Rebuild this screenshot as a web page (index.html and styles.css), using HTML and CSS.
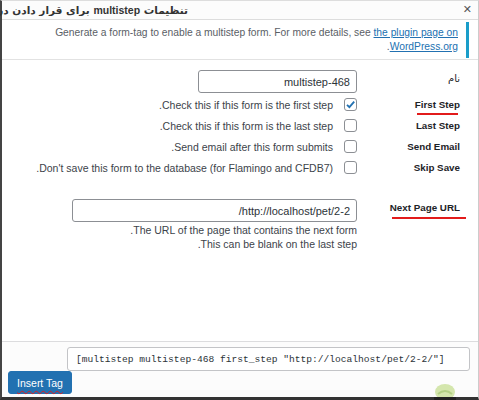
FILE: index.html
```html
<!DOCTYPE html>
<html>
<head>
<meta charset="utf-8">
<link rel="stylesheet" href="styles.css">
</head>
<body>
<div class="frame">
  <div class="titlebar">
    <div class="title">تنظیمات <b>multistep</b> برای قرار دادن در فرم تماس</div>
    <span class="close">✕</span>
  </div>
  <div class="notice" dir="rtl">
    <p>Generate a form-tag to enable a multistep form. For more details, see <a href="#">the plugin page on WordPress.org</a>.</p>
  </div>
  <div class="form" dir="rtl">
    <div class="row row-name">
      <div class="label lbl-fa">نام</div>
      <div class="field"><input class="text name-input" type="text" value="multistep-468"></div>
    </div>
    <div class="row row-check">
      <div class="label"><span class="ul">First Step</span></div>
      <div class="field"><span class="cb checked"><svg viewBox="0 0 13 13" width="13" height="13"><path d="M3 6.8 L5.4 9.2 L10.2 3.6" fill="none" stroke="#2271b1" stroke-width="1.8"/></svg></span><span class="desc">Check this if this form is the first step.</span></div>
    </div>
    <div class="row row-check">
      <div class="label">Last Step</div>
      <div class="field"><span class="cb"></span><span class="desc">Check this if this form is the last step.</span></div>
    </div>
    <div class="row row-check">
      <div class="label">Send Email</div>
      <div class="field"><span class="cb"></span><span class="desc">Send email after this form submits.</span></div>
    </div>
    <div class="row row-check">
      <div class="label">Skip Save</div>
      <div class="field"><span class="cb"></span><span class="desc">Don't save this form to the database (for Flamingo and CFDB7).</span></div>
    </div>
    <div class="row row-url">
      <div class="label"><span class="ul ul-wide">Next Page URL</span></div>
      <div class="field col">
        <input class="text url-input" type="text" value="http://localhost/pet/2-2/">
        <div class="help">The URL of the page that contains the next form.</div>
        <div class="help">This can be blank on the last step.</div>
      </div>
    </div>
  </div>
  <div class="footer">
    <input class="tag" type="text" dir="ltr" value='[multistep multistep-468 first_step "http://localhost/pet/2-2/"]'>
    <button class="insert"><span class="ul-red">Insert Tag</span></button>
  </div>
  <svg class="logo" width="30" height="18" viewBox="0 0 30 18"><ellipse cx="15" cy="10" rx="10" ry="8" fill="#d4e6ad"/><path d="M8 12 Q15 6 22 12" stroke="#b3d085" stroke-width="2" fill="none"/><rect x="4" y="15" width="22" height="3" fill="#222"/></svg>
</div>
</body>
</html>
```
FILE: styles.css
```css
html, body { margin: 0; padding: 0; }
body {
  width: 479px;
  height: 400px;
  overflow: hidden;
  background: #fff;
  font-family: "Liberation Sans", "DejaVu Sans", sans-serif;
  color: #3c434a;
}
.frame {
  position: relative;
  box-sizing: border-box;
  width: 479px;
  height: 400px;
  border-left: 2px solid #444;
  border-bottom: 3px solid #333;
  border-right: 1px solid #ccc;
  border-top: 1px solid #ddd;
  display: flex;
  flex-direction: column;
  background: #fff;
}
.titlebar {
  height: 18px;
  border-bottom: 1px solid #ddd;
  display: flex;
  align-items: center;
  justify-content: space-between;
  background: #fcfcfc;
}
.title {
  direction: rtl;
  width: 188px;
  margin-left: -2px;
  overflow: hidden;
  white-space: nowrap;
  font-size: 10.5px;
  font-weight: bold;
  color: #333;
  font-family: "DejaVu Sans", sans-serif;
}
.title b { font-family: "Liberation Sans", sans-serif; }
.close {
  font-size: 11px;
  font-weight: bold;
  color: #555;
  margin-right: 6px;
  margin-top: -2px;
}
.notice {
  border-bottom: 1px solid #e2e2e2;
  padding: 2px 9px 0 20px;
  height: 37px;
  box-sizing: content-box;
}
.notice p {
  margin: 0;
  border-right: 3px solid #1a9dc9;
  padding: 4px 8px 4px 0;
  font-size: 10.27px;
  line-height: 14px;
  color: #5a6066;
  text-align: right;
}
.notice a { color: #2271b1; }
.form {
  padding: 10px 18px 0 0;
  display: flex;
  flex-direction: column;
}
.row {
  display: flex;
  align-items: center;
}
.label {
  width: 103px;
  flex: none;
  font-size: 9.8px;
  font-weight: bold;
  color: #1d2327;
}
.lbl-fa {
  font-weight: normal;
  font-family: "DejaVu Sans", sans-serif;
  font-size: 10px;
  align-self: flex-start;
  margin-top: 3px;
}
.field {
  display: flex;
  align-items: center;
}
.field.col {
  flex-direction: column;
  align-items: flex-start;
}
.text {
  box-sizing: border-box;
  height: 23px;
  border: 1px solid #8c8f94;
  border-radius: 3px;
  padding: 0 6px;
  font-family: "Liberation Sans", sans-serif;
  font-size: 11px;
  color: #2c3338;
  background: #fff;
  direction: rtl;
}
.name-input { width: 159px; }
.url-input { width: 285px; margin-right: 0; }
.row-name { margin-bottom: 1px; }
.row-check { height: 21px; }
.cb {
  box-sizing: border-box;
  width: 13px;
  height: 13px;
  border: 1px solid #8c8f94;
  border-radius: 3px;
  background: #fff;
  margin-left: 11px;
  display: inline-flex;
}
.cb svg { margin: -1px; }
.desc, .help {
  font-size: 10.5px;
  color: #3c434a;
}
.ul { position: relative; }
.ul::after {
  content: "";
  position: absolute;
  left: 2px;
  right: 2px;
  bottom: -5px;
  height: 2px;
  background: #e21b1b;
}
.ul-wide::after { left: 2px; right: -6px; bottom: -6px; }
.row-url { margin-top: 21px; align-items: flex-start; }
.row-url .label { margin-top: 3px; }
.help { line-height: 14px; }
.url-input + .help { margin-top: 1px; }
.footer {
  margin-top: auto;
  border-top: 1px solid #dcdcde;
  background: #fcfcfc;
  padding: 5px 8px 3px 6px;
  display: flex;
  flex-direction: column;
  align-items: flex-end;
}
.tag {
  box-sizing: border-box;
  width: 403px;
  height: 24px;
  border: 1px solid #c3c4c7;
  border-radius: 3px;
  padding: 0 8px;
  font-family: "Liberation Mono", monospace;
  font-size: 9.6px;
  color: #2c3338;
  background: #fff;
}
.insert {
  align-self: flex-start;
  margin-left: 0;
  width: 64px;
  height: 23px;
  background: #2271b1;
  border: 1px solid #2271b1;
  border-radius: 3px;
  color: #fff;
  font-family: "Liberation Sans", sans-serif;
  font-size: 10.5px;
  padding: 0;
}
.ul-red {
  text-decoration: underline wavy #e21b1b;
  text-underline-offset: 3px;
  text-decoration-thickness: 1px;
}
.logo {
  position: absolute;
  right: 18px;
  bottom: -3px;
}
```
